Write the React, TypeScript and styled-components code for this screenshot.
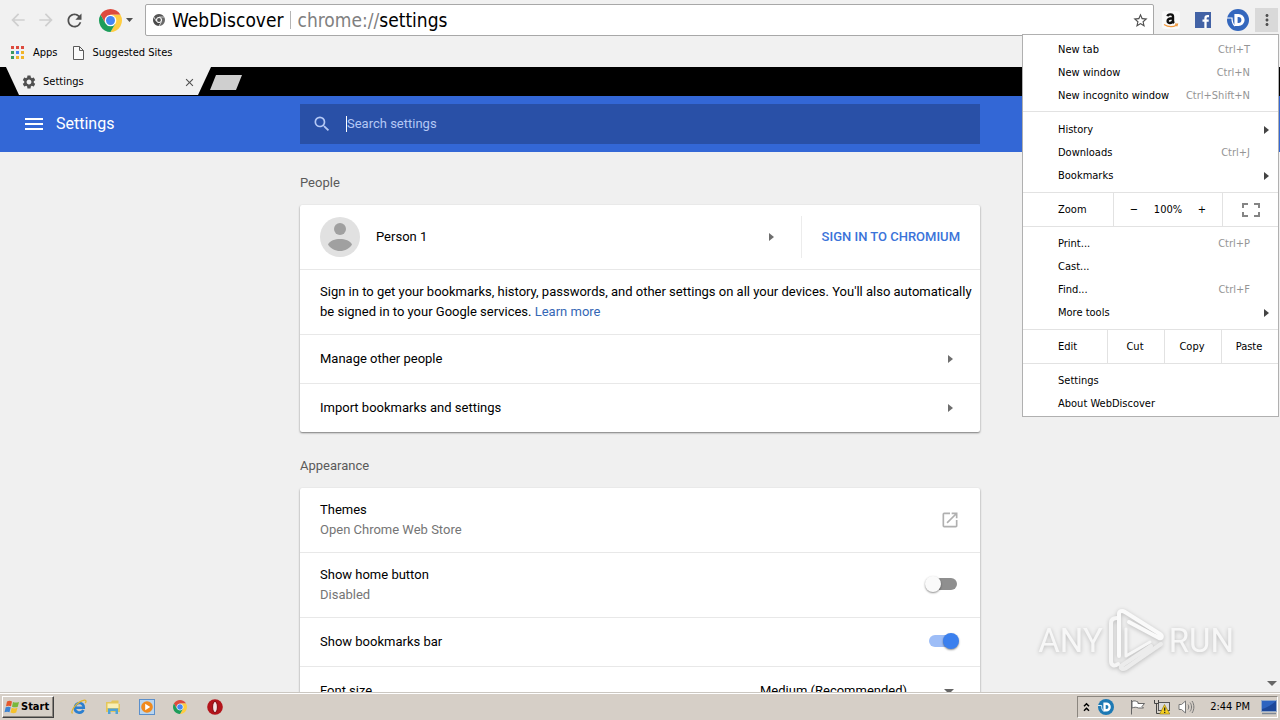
import React from "react";
import styled, { createGlobalStyle } from "styled-components";
import {
  MdArrowBack,
  MdArrowForward,
  MdClose,
  MdMenu,
  MdMoreVert,
  MdOpenInNew,
  MdRefresh,
  MdSearch,
  MdSettings,
  MdStarBorder,
} from "react-icons/md";

const uiFont = `"DejaVu Sans Condensed", "DejaVu Sans", sans-serif`;
const pageFont = `Roboto, sans-serif`;

const GlobalStyle = createGlobalStyle`
  *, *::before, *::after { box-sizing: border-box; }
  body { margin: 0; background: #f0f0f0; overflow: hidden; }
  button, input, select { font: inherit; color: inherit; margin: 0; padding: 0; border: 0; background: none; }
  button { cursor: pointer; }
  a { color: inherit; text-decoration: none; }
  svg { display: block; flex: none; }
`;

const Screen = styled.div`
  position: relative;
  display: flex;
  flex-direction: column;
  height: 100vh;
  font: 11px/16px ${uiFont};
  color: #000;
`;

/* Browser chrome */

const Toolbar = styled.header`
  display: flex;
  align-items: center;
  height: 40px;
  padding: 0 2px 0 8px;
  background: #f1f1f1;
`;

const ToolButton = styled.button<{ $width?: number; $tone?: string; $active?: boolean }>`
  display: flex;
  align-items: center;
  justify-content: center;
  flex: none;
  width: ${(p) => p.$width ?? 28}px;
  height: 24px;
  color: ${(p) => p.$tone ?? "#505050"};
  background: ${(p) => (p.$active ? "#d9d9d9" : "none")};
`;

const EngineButton = styled(ToolButton)`
  justify-content: flex-end;
  gap: 4px;
  padding-right: 12px;
`;

const AddressBar = styled.div`
  display: flex;
  align-items: center;
  flex: 1;
  gap: 7px;
  height: 32px;
  margin-right: 3px;
  padding: 0 5px 0 7px;
  border: 1px solid #a8a8a8;
  border-radius: 2px;
  background: #fff;
  color: #555;
`;

const Origin = styled.span`
  padding-right: 6px;
  border-right: 1px solid #b5b5b5;
  font-size: 19px;
  line-height: 18px;
  color: #000;
`;

const Url = styled.div`
  flex: 1;
  font-size: 19px;
  line-height: 24px;
  color: #808080;
`;

const UrlHost = styled.span`
  color: #000;
`;

const Extensions = styled.div`
  display: flex;
  align-items: center;
`;

const BookmarkBar = styled.nav`
  display: flex;
  align-items: center;
  gap: 15px;
  height: 27px;
  padding: 0 0 2px 11px;
  background: #f1f1f1;
`;

const Bookmark = styled.a`
  display: flex;
  align-items: center;
  gap: 9px;
`;

const TabStrip = styled.div`
  display: flex;
  align-items: flex-start;
  height: 29px;
  padding-left: 6px;
  background: #000;
`;

const Tab = styled.div`
  display: flex;
  align-items: center;
  gap: 6px;
  width: 205px;
  height: 28px;
  padding: 2px 15px 0 15px;
  background: #f1f1f1;
  color: #505050;
  clip-path: polygon(0 0, 100% 0, calc(100% - 13px) 100%, 13px 100%);
`;

const TabTitle = styled.span`
  flex: 1;
  color: #000;
`;

const NewTab = styled.button`
  width: 32px;
  height: 15px;
  margin-top: 8px;
  margin-left: -1px;
  background: #cfcfcf;
  clip-path: polygon(6px 0, 100% 0, calc(100% - 6px) 100%, 0 100%);
`;

/* Settings page */

const SettingsHeader = styled.div`
  display: grid;
  grid-template-columns: 1fr minmax(0, 680px) 1fr;
  align-items: center;
  flex: none;
  height: 56px;
  background: #3367d6;
  color: #fff;
  font-family: ${pageFont};
`;

const HeaderTitle = styled.div`
  display: flex;
  align-items: center;
  gap: 10px;
  padding-left: 22px;
`;

const Heading = styled.h1`
  margin: 0;
  font-size: 16px;
  font-weight: 400;
  line-height: 24px;
`;

const SearchField = styled.label`
  display: flex;
  align-items: center;
  gap: 14px;
  height: 40px;
  padding-left: 12px;
  background: #2950a7;
  color: #b4c8f5;
`;

const SearchInput = styled.input`
  flex: 1;
  height: 16px;
  border-left: 1px solid #fff;
  outline: none;
  font-size: 13px;
  &::placeholder {
    color: #b4c8f5;
    opacity: 1;
  }
`;

const SettingsBody = styled.main`
  flex: 1;
  min-height: 0;
  overflow: hidden;
  background: #f0f0f0;
  font-family: ${pageFont};
  font-size: 13px;
  line-height: 20px;
`;

const Column = styled.div`
  display: flex;
  flex-direction: column;
  gap: 24px;
  max-width: 680px;
  margin: 0 auto;
  padding-top: 21px;
`;

const SectionTitle = styled.h2`
  margin: 0 0 12px;
  font-size: 13px;
  font-weight: 400;
  line-height: 20px;
  color: #5a5a5a;
`;

const Card = styled.div`
  background: #fff;
  border-radius: 2px;
  box-shadow: 0 1px 2px rgba(0, 0, 0, 0.5);
`;

const Row = styled.div<{ $tall?: boolean }>`
  display: flex;
  align-items: center;
  justify-content: space-between;
  height: ${(p) => (p.$tall ? 65 : 49)}px;
  padding: 0 20px;
  border-bottom: 1px solid #e8e8e8;
  &:last-child {
    height: 48px;
    border-bottom: 0;
  }
`;

const RowButton = styled(Row).attrs({ as: "button" })`
  width: 100%;
  padding-right: 27px;
  text-align: left;
  border-bottom: 1px solid #e8e8e8;
`;

const Profile = styled.button`
  display: flex;
  align-items: center;
  flex: 1;
  gap: 16px;
  padding-right: 27px;
  text-align: left;
`;

const Grow = styled.span`
  flex: 1;
`;

const SignIn = styled.button`
  height: 42px;
  padding-left: 20px;
  border-left: 1px solid #ececec;
  font-weight: 500;
  color: #3b73d9;
`;

const Note = styled.p`
  margin: 0;
  white-space: nowrap;
`;

const TextLink = styled.a`
  color: #3567b5;
`;

const Secondary = styled.div`
  color: #757575;
`;

const Arrow = styled.span<{ $dark?: boolean }>`
  width: 0;
  height: 0;
  border: 4px solid transparent;
  border-left: 5px solid ${(p) => (p.$dark ? "#444" : "#6e6e6e")};
  border-right: 0;
`;

const DownArrow = styled.span`
  width: 0;
  height: 0;
  border: 5px solid transparent;
  border-top-color: #666;
  border-bottom: 0;
`;

const Toggle = styled.input.attrs({ type: "checkbox" })`
  appearance: none;
  position: relative;
  flex: none;
  width: 36px;
  height: 16px;
  margin-bottom: 2px;
  &::before {
    content: "";
    position: absolute;
    inset: 2px 3px 2px 5px;
    border-radius: 6px;
    background: #8f8f8f;
  }
  &::after {
    content: "";
    position: absolute;
    left: 1px;
    width: 16px;
    height: 16px;
    border-radius: 50%;
    background: #fafafa;
    box-shadow: 0 1px 2px rgba(0, 0, 0, 0.45);
  }
  &:checked::before {
    background: #9dbdf7;
  }
  &:checked::after {
    left: 19px;
    background: #3b80ee;
  }
`;

const SelectBox = styled.div`
  display: flex;
  align-items: center;
  width: 200px;
  padding-right: 6px;
`;

const Select = styled.select`
  appearance: none;
  flex: 1;
  height: 20px;
  color: #000;
`;

/* Application menu */

const Menu = styled.div`
  position: absolute;
  top: 34px;
  right: 1px;
  width: 257px;
  border: 1px solid #b0b0b0;
  background: #fff;
`;

const MenuGroup = styled.div<{ $pad: string }>`
  padding: ${(p) => p.$pad};
  border-top: 1px solid #e2e2e2;
  &:first-child {
    border-top: 0;
  }
`;

const MenuRow = styled.button`
  display: flex;
  align-items: center;
  justify-content: space-between;
  width: 100%;
  height: 23px;
  padding: 0 28px 0 35px;
`;

const Shortcut = styled.span`
  color: #959595;
`;

const SubArrow = styled(Arrow)`
  margin-right: -19px;
`;

const MenuSplit = styled.div<{ $columns: string }>`
  display: grid;
  grid-template-columns: ${(p) => p.$columns};
  height: 34px;
  border-top: 1px solid #e2e2e2;
`;

const SplitLabel = styled.span`
  padding: 9px 0 0 35px;
`;

const SplitCell = styled.div`
  display: flex;
  align-items: center;
  justify-content: space-around;
  padding: 0 8px;
  border-left: 1px solid #e2e2e2;
`;

const SplitButton = styled.button`
  padding-right: 2px;
  border-left: 1px solid #e2e2e2;
`;

/* Overlays on the page */

const Watermark = styled.div`
  position: absolute;
  right: 46px;
  bottom: 46px;
  display: flex;
  align-items: center;
  gap: 4px;
  height: 66px;
  pointer-events: none;
  filter: drop-shadow(0 1px 2px rgba(0, 0, 0, 0.22));
`;

const WatermarkWord = styled.span`
  font: 400 33px/40px ${pageFont};
  color: #f7f7f7;
`;

const ScrollDown = styled.button`
  position: absolute;
  right: 0;
  bottom: 29px;
  display: flex;
  align-items: center;
  justify-content: center;
  width: 16px;
  height: 16px;
`;

/* Taskbar */

const Taskbar = styled.footer`
  display: flex;
  align-items: center;
  flex: none;
  height: 28px;
  padding: 1px 2px 0;
  border-top: 1px solid #cbc7c1;
  background: #d6cfc7;
  box-shadow: inset 0 1px 0 #fff;
`;

const StartButton = styled.button`
  display: flex;
  align-items: center;
  gap: 1px;
  width: 52px;
  height: 22px;
  padding-left: 1px;
  border: 1px solid;
  border-color: #fff #404040 #404040 #fff;
  box-shadow: inset -1px -1px 0 #8b867f;
  font-weight: 700;
`;

const QuickLaunch = styled.div`
  display: flex;
  align-items: center;
  gap: 18px;
  flex: 1;
  padding-left: 17px;
`;

const LaunchButton = styled.button`
  width: 16px;
  height: 16px;
`;

const Tray = styled.div`
  display: flex;
  align-items: center;
  gap: 8px;
  height: 22px;
  padding: 0 0 0 5px;
  border: 1px solid;
  border-color: #8b867f #fff #fff #8b867f;
`;

const Clock = styled.time`
  padding: 0 3px 0 7px;
`;

function ChromeLogo({ size, mono }: { size: number; mono?: boolean }) {
  const c = mono
    ? ["#555", "#6a6a6a", "#4a4a4a", "#555"]
    : ["#dd4b3e", "#ffcd40", "#1c9d5a", "#4587f3"];
  return (
    <svg width={size} height={size} viewBox="2 2 44 44">
      <circle cx="24" cy="24" r="12" fill="#fff" />
      <path fill={c[0]} d="M14.47 29.5 4.95 13A22 22 0 0 1 43.05 13H24a11 11 0 0 0-9.53 16.5z" />
      <path fill={c[1]} d="M24 13h19.05A22 22 0 0 1 24 46l9.53-16.5A11 11 0 0 0 24 13z" />
      <path fill={c[2]} d="M33.53 29.5 24 46A22 22 0 0 1 4.95 13l9.52 16.5a11 11 0 0 0 19.06 0z" />
      {mono && <path d="M24 13h19M33.500 29.500 24 46M14.500 29.500 5 13" stroke="#ddd" strokeWidth="3" />}
      <circle cx="24" cy="24" r={mono ? 7 : 8.6} fill={c[3]} />
    </svg>
  );
}

function AppsIcon() {
  const colors = ["#dd4b3e", "#dd4b3e", "#dd4b3e", "#3d9960", "#4285f4", "#f0b429", "#3d9960", "#f0b429", "#f0b429"];
  return (
    <svg width="13" height="13" viewBox="0 0 13 13">
      {colors.map((fill, i) => (
        <rect key={i} x={(i % 3) * 5} y={Math.floor(i / 3) * 5} width="3" height="3" fill={fill} />
      ))}
    </svg>
  );
}

function PageIcon() {
  return (
    <svg width="11" height="14" viewBox="0 0 11 14" fill="#fafafa" stroke="#5a5a5a">
      <path d="M.5.5h6l4 4v9H.5zM6.500.5v4h4" />
    </svg>
  );
}

function DiscoverIcon({ size, color }: { size: number; color: string }) {
  return (
    <svg width={size} height={size} viewBox="0 0 22 22">
      <circle cx="11" cy="11" r="11" fill={color} />
      <path d="M0 9h5c0 4 .5 6 3 8" fill="none" stroke="#fff" strokeWidth="1.200" />
      <path d="M9 6.500h2.500a4.500 4.500 0 0 1 0 9H9z" fill="none" stroke="#fff" strokeWidth="3.200" />
    </svg>
  );
}

function AmazonIcon() {
  return (
    <svg width="18" height="18" viewBox="0 0 18 18" fill="none">
      <rect width="18" height="18" rx="3" fill="#fafafa" />
      <path d="M5.500 5.200C6 2.800 11 2.600 11 5.500v4.600c0 1 .4 1.500 1 2M11 7.300C7.500 7.200 5.600 8 5.600 10c0 2.800 4.600 2.600 5.400-.4" stroke="#111" strokeWidth="2.400" />
      <path d="M2 13.500c4 2.500 9 2.600 12.500.7M13 13.200h2.500l-.7 2.200" stroke="#f0973b" strokeWidth="1.200" />
    </svg>
  );
}

function FacebookIcon() {
  return (
    <svg width="16" height="16" viewBox="0 0 16 16">
      <rect width="16" height="16" fill="#4262a5" />
      <path d="M10.500 16V9.500M14 4.200h-1.500c-1.400 0-2 .7-2 2V16M7.500 8.700h6.200" fill="none" stroke="#fff" strokeWidth="2.300" />
    </svg>
  );
}

function Avatar() {
  return (
    <svg width="40" height="40" viewBox="0 0 40 40">
      <circle cx="20" cy="20" r="20" fill="#e1e1e1" />
      <circle cx="20" cy="12" r="6" fill="#a0a0a0" />
      <path d="M8 27.500C10 23.500 15 22 20 22s10 1.500 12 5.500C29.500 31.500 25 34 20 34S10.500 31.500 8 27.500z" fill="#a0a0a0" />
    </svg>
  );
}

function FullscreenIcon() {
  return (
    <svg width="18" height="14" viewBox="0 0 18 14" fill="none" stroke="#858585" strokeWidth="2">
      <path d="M1 5V1h5M12 1h5v4M17 9v4h-5M6 13H1V9" />
    </svg>
  );
}

function PlayMark() {
  return (
    <svg width="58" height="66" viewBox="0 0 58 66" fill="none" strokeLinejoin="round" strokeLinecap="round">
      <path d="M10 10c-4 0-6 2-6 5v38c0 4 3 6 7 3" stroke="#f6f6f6" strokeWidth="4" />
      <path d="M12 48V6c0-3 3-4 6-2l35 22c3 2 2 5-1 4L22 14" stroke="#fafafa" strokeWidth="4" />
      <path d="M19 21v27l24-14" stroke="#f6f6f6" strokeWidth="3" />
      <path d="M54 36 19 60c-3 2-6 1-5-2l30-20" stroke="#ececec" strokeWidth="4" />
    </svg>
  );
}

function WindowsFlag() {
  return (
    <svg width="16" height="16" viewBox="0 0 16 16">
      <path d="M3 2.500c2-1 3.500-.8 5 0L7 7.300c-1.600-.8-3-.8-5 0z" fill="#e4582b" />
      <path d="M9 3c2 .8 3.500.8 6 0l-1.200 4.700C12 8.500 10 8.500 8 7.700z" fill="#78b83a" />
      <path d="M1.700 8.300c2-.8 3.400-.8 5 0l-1.200 5c-1.500-.9-3-.9-5 0z" fill="#3c83d2" />
      <path d="M7.700 8.800c2 .8 3.800.8 5.800 0l-1.300 4.800c-2 .8-3.600.8-5.700-.1z" fill="#f5c12c" />
    </svg>
  );
}

function ExplorerEIcon() {
  return (
    <svg width="16" height="16" viewBox="0 0 16 16" fill="none">
      <path d="M3.500 8.700h9.300c.2-6-8.500-6.500-9 .3-.2 5 6.700 6.200 8.600 2" stroke="#2b7fd0" strokeWidth="2.600" />
      <path d="M1.500 14.500C-1 12 6 2.500 13.500 1.200c2-.2 1.700 1.600.8 3" stroke="#e2b52f" strokeWidth="1.300" />
    </svg>
  );
}

function FolderIcon() {
  return (
    <svg width="16" height="16" viewBox="0 0 16 16">
      <path d="M1 3h5l1-1.500h6.500V5H15v8H1z" fill="#e3c65c" />
      <path d="M2.500 4.500h11V9h-11z" fill="#f9efb4" />
      <path d="M3 15V9.500h10V15h-2.500v-3h-5v3z" fill="#4fa3d6" />
    </svg>
  );
}

function MediaIcon() {
  return (
    <svg width="16" height="16" viewBox="0 0 16 16">
      <rect x=".5" y=".5" width="15" height="15" fill="#b9d5ef" stroke="#5b8fcb" />
      <circle cx="8" cy="8" r="5.800" fill="#f08a1d" />
      <path d="M6.200 4.800 11.200 8l-5 3.200z" fill="#fff" />
    </svg>
  );
}

function OperaIcon() {
  return (
    <svg width="16" height="16" viewBox="0 0 16 16">
      <circle cx="8" cy="8" r="7.800" fill="#b3141b" />
      <ellipse cx="8" cy="8" rx="2.400" ry="5.600" fill="#f4e4e4" stroke="#7d0a10" />
    </svg>
  );
}

function ChevronsUp() {
  return (
    <svg width="7" height="10" viewBox="0 0 7 10" fill="none" stroke="#000" strokeWidth="1.500">
      <path d="M1 4.200 3.500 1.700 6 4.200M1 8.700l2.500-2.500L6 8.700" />
    </svg>
  );
}

function FlagIcon() {
  return (
    <svg width="16" height="16" viewBox="0 0 16 16" fill="#fff" stroke="#666">
      <path d="M1.500 1v14.500M2 2.500c3-1.500 4 0 6 .5v1.500h6.500L12 7.500l1.500 1.500H8.500C6 8 4.500 8 2 9z" />
    </svg>
  );
}

function NetworkIcon() {
  return (
    <svg width="16" height="16" viewBox="0 0 16 16">
      <rect x="4.500" y="3.500" width="11" height="8" fill="#d9d9d9" stroke="#555" />
      <path d="M.5 1v3.500h4V1M2.500 5v9.500h4" fill="none" stroke="#444" />
      <path d="M10.500 5.500 15.800 15H5.700z" fill="#f6cf1f" stroke="#8c7310" strokeWidth=".6" />
      <path d="M10.700 8.500v3.200M10.700 12.700v1.300" stroke="#222" strokeWidth="1.300" />
    </svg>
  );
}

function SpeakerIcon() {
  return (
    <svg width="17" height="14" viewBox="0 0 17 14" fill="none" stroke="#777">
      <path d="M1 4.500h2.500L7.500 1v12L3.500 9.500H1z" fill="#fff" />
      <path d="M10 4.500c1 1.500 1 3.500 0 5M12 2.500c2 2.500 2 6.500 0 9M14 1c2.500 3.500 2.500 8.500 0 12" />
    </svg>
  );
}

function DesktopIcon() {
  return (
    <svg width="16" height="15" viewBox="0 0 16 15">
      <rect x=".5" y=".5" width="15" height="11" fill="#2e64c0" stroke="#93a9c9" />
      <path d="M1 9C6 8 10 5 15 1v10H1z" fill="#1d489a" />
      <path d="M1 13.500h14" stroke="#7d8896" strokeWidth="1.500" />
    </svg>
  );
}

function MenuItem({ label, keys, sub }: { label: string; keys?: string; sub?: boolean }) {
  return (
    <MenuRow role="menuitem">
      {label}
      {keys && <Shortcut>{keys}</Shortcut>}
      {sub && <SubArrow $dark />}
    </MenuRow>
  );
}

function AppMenu() {
  return (
    <Menu role="menu">
      <MenuGroup $pad="3px 0 4px">
        <MenuItem label="New tab" keys="Ctrl+T" />
        <MenuItem label="New window" keys="Ctrl+N" />
        <MenuItem label="New incognito window" keys="Ctrl+Shift+N" />
      </MenuGroup>
      <MenuGroup $pad="6px 0 5px">
        <MenuItem label="History" sub />
        <MenuItem label="Downloads" keys="Ctrl+J" />
        <MenuItem label="Bookmarks" sub />
      </MenuGroup>
      <MenuSplit $columns="90px 109px 1fr">
        <SplitLabel>Zoom</SplitLabel>
        <SplitCell>
          <button aria-label="Zoom out">−</button>
          <span>100%</span>
          <button aria-label="Zoom in">+</button>
        </SplitCell>
        <SplitCell>
          <button aria-label="Full screen">
            <FullscreenIcon />
          </button>
        </SplitCell>
      </MenuSplit>
      <MenuGroup $pad="5px 0">
        <MenuItem label="Print..." keys="Ctrl+P" />
        <MenuItem label="Cast..." />
        <MenuItem label="Find..." keys="Ctrl+F" />
        <MenuItem label="More tools" sub />
      </MenuGroup>
      <MenuSplit $columns="84px 57px 57px 1fr">
        <SplitLabel>Edit</SplitLabel>
        <SplitButton>Cut</SplitButton>
        <SplitButton>Copy</SplitButton>
        <SplitButton>Paste</SplitButton>
      </MenuSplit>
      <MenuGroup $pad="5px 0 1px">
        <MenuItem label="Settings" />
        <MenuItem label="About WebDiscover" />
      </MenuGroup>
    </Menu>
  );
}

export default function App() {
  return (
    <Screen>
      <GlobalStyle />
      <Toolbar>
        <ToolButton $width={20} $tone="#cfcfcf" aria-label="Back">
          <MdArrowBack size={20} />
        </ToolButton>
        <ToolButton $width={36} $tone="#cfcfcf" aria-label="Forward">
          <MdArrowForward size={20} />
        </ToolButton>
        <ToolButton $width={20} aria-label="Reload">
          <MdRefresh size={21} />
        </ToolButton>
        <EngineButton $width={61} aria-label="Search engine">
          <ChromeLogo size={23} />
          <svg width="7" height="4" viewBox="0 0 7 4">
            <path d="M0 0h7L3.500 4z" fill="#505050" />
          </svg>
        </EngineButton>
        <AddressBar>
          <ChromeLogo size={12} mono />
          <Origin>WebDiscover</Origin>
          <Url role="textbox" aria-label="Address">
            chrome://<UrlHost>settings</UrlHost>
          </Url>
          <ToolButton $width={16} aria-label="Bookmark this page">
            <MdStarBorder size={17} />
          </ToolButton>
        </AddressBar>
        <Extensions>
          <ToolButton aria-label="Amazon">
            <AmazonIcon />
          </ToolButton>
          <ToolButton $width={36} aria-label="Facebook">
            <FacebookIcon />
          </ToolButton>
          <ToolButton $width={34} aria-label="WebDiscover">
            <DiscoverIcon size={22} color="#3467bd" />
          </ToolButton>
          <ToolButton $width={23} $active aria-label="Menu">
            <MdMoreVert size={18} />
          </ToolButton>
        </Extensions>
      </Toolbar>
      <BookmarkBar>
        <Bookmark href="#apps">
          <AppsIcon />
          Apps
        </Bookmark>
        <Bookmark href="#suggested">
          <PageIcon />
          Suggested Sites
        </Bookmark>
      </BookmarkBar>
      <TabStrip>
        <Tab>
          <MdSettings size={16} />
          <TabTitle>Settings</TabTitle>
          <ToolButton $width={14} aria-label="Close tab">
            <MdClose size={13} />
          </ToolButton>
        </Tab>
        <NewTab aria-label="New tab" />
      </TabStrip>

      <SettingsHeader>
        <HeaderTitle>
          <button aria-label="Main menu">
            <MdMenu size={24} />
          </button>
          <Heading>Settings</Heading>
        </HeaderTitle>
        <SearchField>
          <MdSearch size={20} />
          <SearchInput type="text" placeholder="Search settings" aria-label="Search settings" />
        </SearchField>
      </SettingsHeader>

      <SettingsBody>
        <Column>
          <section>
            <SectionTitle>People</SectionTitle>
            <Card>
              <Row $tall>
                <Profile>
                  <Avatar />
                  <Grow>Person 1</Grow>
                  <Arrow />
                </Profile>
                <SignIn>SIGN IN TO CHROMIUM</SignIn>
              </Row>
              <Row $tall>
                <Note>
                  Sign in to get your bookmarks, history, passwords, and other settings on all your devices. You'll also
                  automatically
                  <br />
                  be signed in to your Google services. <TextLink href="#learn">Learn more</TextLink>
                </Note>
              </Row>
              <RowButton>
                Manage other people
                <Arrow />
              </RowButton>
              <RowButton>
                Import bookmarks and settings
                <Arrow />
              </RowButton>
            </Card>
          </section>
          <section>
            <SectionTitle>Appearance</SectionTitle>
            <Card>
              <Row $tall>
                <div>
                  Themes
                  <Secondary>Open Chrome Web Store</Secondary>
                </div>
                <ToolButton $width={20} $tone="#b0b0b0" aria-label="Open Chrome Web Store">
                  <MdOpenInNew size={20} />
                </ToolButton>
              </Row>
              <Row $tall>
                <label htmlFor="home">
                  Show home button
                  <Secondary>Disabled</Secondary>
                </label>
                <Toggle id="home" />
              </Row>
              <Row>
                <label htmlFor="bar">Show bookmarks bar</label>
                <Toggle id="bar" defaultChecked />
              </Row>
              <Row>
                <label htmlFor="font">Font size</label>
                <SelectBox>
                  <Select id="font">
                    <option>Medium (Recommended)</option>
                  </Select>
                  <DownArrow />
                </SelectBox>
              </Row>
            </Card>
          </section>
        </Column>
      </SettingsBody>

      <Taskbar>
        <StartButton>
          <WindowsFlag />
          Start
        </StartButton>
        <QuickLaunch>
          <LaunchButton aria-label="Internet Explorer">
            <ExplorerEIcon />
          </LaunchButton>
          <LaunchButton aria-label="Explorer">
            <FolderIcon />
          </LaunchButton>
          <LaunchButton aria-label="Media Player">
            <MediaIcon />
          </LaunchButton>
          <LaunchButton aria-label="Chrome">
            <ChromeLogo size={14} />
          </LaunchButton>
          <LaunchButton aria-label="Opera">
            <OperaIcon />
          </LaunchButton>
        </QuickLaunch>
        <Tray>
          <ChevronsUp />
          <DiscoverIcon size={16} color="#1d79b4" />
          <span />
          <FlagIcon />
          <NetworkIcon />
          <SpeakerIcon />
          <Clock>2:44 PM</Clock>
          <DesktopIcon />
        </Tray>
      </Taskbar>

      <Watermark aria-hidden="true">
        <WatermarkWord>ANY</WatermarkWord>
        <PlayMark />
        <WatermarkWord>RUN</WatermarkWord>
      </Watermark>
      <ScrollDown aria-label="Scroll down">
        <DownArrow />
      </ScrollDown>
      <AppMenu />
    </Screen>
  );
}
